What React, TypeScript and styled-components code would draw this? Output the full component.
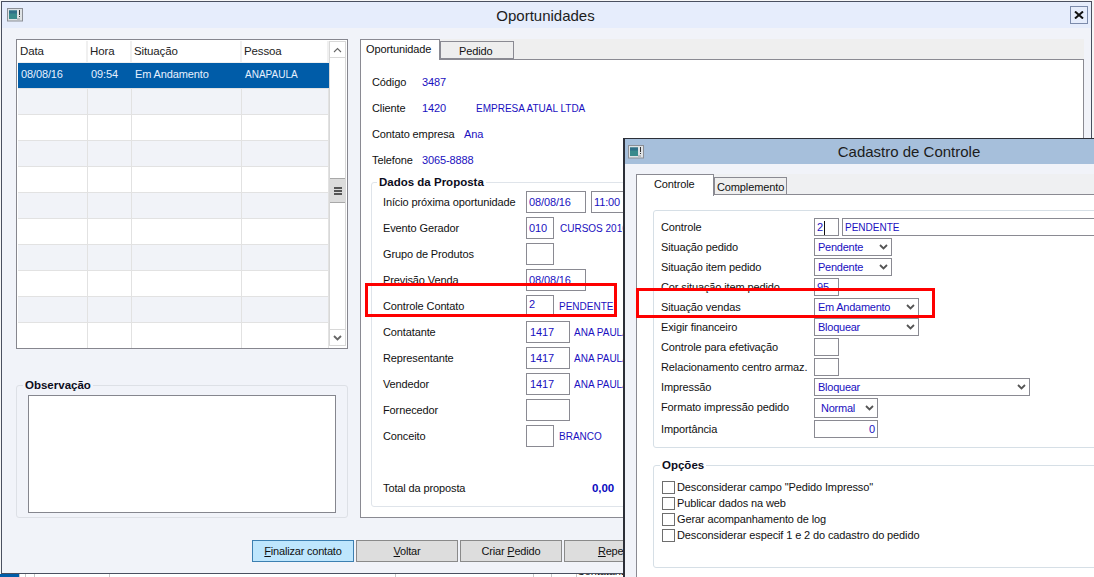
import React from "react";
import styled, { createGlobalStyle } from "styled-components";

const Global = createGlobalStyle`
  html, body { margin: 0; padding: 0; background: #fff; }
  * { box-sizing: border-box; }
  body { font-family: "Liberation Sans", Arial, sans-serif; font-size: 11px; letter-spacing: -0.12px; color: #111; }
`;

const Screen = styled.div`
  position: relative; width: 1094px; height: 577px; overflow: hidden; background: #f6f6f6;
`;
const Backdrop = styled.div`
  position: absolute; left: 0; top: 574px; width: 1094px; height: 3px;
  display: flex; background: #fff; overflow: hidden;
`;
const BackCell = styled.div<{ $w: number; $bg?: string }>`
  flex: none; width: ${p => p.$w}px; height: 3px; border-right: 1px solid #c8c8c8;
  background: ${p => p.$bg ?? "transparent"};
`;
const BackText = styled.div`
  flex: none; margin-top: -9px; font-size: 11px; line-height: 13px; color: #111;
`;
const Window = styled.div<{ $x: number; $y: number; $w: number; $h: number; $left: number; $bd: string }>`
  position: absolute; left: ${p => p.$x}px; top: ${p => p.$y}px;
  width: ${p => p.$w}px; height: ${p => p.$h}px;
  border: 1px solid ${p => p.$bd}; border-left-width: ${p => p.$left}px;
  display: flex; flex-direction: column; background: #f1f3f9;
`;
const TitleBar = styled.div<{ $h: number; $bg: string; $pad: number }>`
  flex: none; height: ${p => p.$h}px; background: ${p => p.$bg};
  display: grid; grid-template-columns: 1fr auto 1fr; align-items: center;
  padding: 0 3px 0 ${p => p.$pad}px;
`;
const Title = styled.div<{ $nudge?: number }>`
  font-size: 15px; color: #1c1c1c; letter-spacing: 0; padding-right: ${p => p.$nudge ?? 0}px;
`;
const CloseButton = styled.div`
  justify-self: end; width: 18px; height: 18px; margin-right: 0; border: 1px solid #7c8bab;
  display: flex; align-items: center; justify-content: center; background: #e6edfc;
`;
const MainBody = styled.div`
  flex: 1; padding: 11px 0 0 14px; display: flex; flex-direction: column;
`;
const Columns = styled.div`
  display: grid; grid-template-columns: 332px 724px; column-gap: 12px; height: 479px;
`;
const LeftColumn = styled.div`display: flex; flex-direction: column;`;
const ListBox = styled.div`
  height: 310px; border: 1px solid #86868e; padding: 1px 1px 2px 1px; background: #fff;
  display: grid; grid-template-columns: 311px 17px; overflow: hidden;
`;
const ListCols = "70px 44px 110px 87px";
const ListHead = styled.div`
  display: grid; grid-template-columns: ${ListCols}; height: 22px; background: #f0f0f0;
`;
const HeadCell = styled.div`
  background: #fff; margin-right: 2px; padding-left: 2px; line-height: 21px; height: 21px; font-size: 11.5px; color: #222;
`;
const ListRow = styled.div<{ $sel?: boolean; $alt?: boolean }>`
  display: grid; grid-template-columns: ${ListCols}; height: 26px;
  background: ${p => (p.$sel ? "#005ca8" : p.$alt ? "#f1f3f8" : "#fff")};
  border-bottom: 1px solid #e2e2e2;
  color: ${p => (p.$sel ? "#e6f0ff" : "inherit")};
`;
const ListCell = styled.div<{ $sel?: boolean; $caps?: boolean }>`
  border-right: 1px solid ${p => (p.$sel ? "transparent" : "#e2e2e2")};
  padding-left: 3px; line-height: ${p => (p.$caps ? 23 : 22)}px; font-size: ${p => (p.$caps ? 10 : 11)}px;
  letter-spacing: ${p => (p.$caps ? 0 : -0.12)}px;
`;
const ScrollBar = styled.div`
  display: flex; flex-direction: column; height: 305px; background: #fff;
  border-left: 1px solid #d8d8d8; border-right: 1px solid #d8d8d8;
`;
const ScrollBtn = styled.div`
  flex: none; height: 17px; display: flex; align-items: center; justify-content: center;
  border-top: 1px solid #d8d8d8; border-bottom: 1px solid #d8d8d8; background: #fff;
`;
const ScrollThumb = styled.div`
  flex: none; height: 25px; margin-top: 120px; background: #dcdcdc;
  border-top: 1px solid #a8a8a8; border-bottom: 1px solid #a8a8a8;
  display: flex; flex-direction: column; gap: 1px; align-items: center; justify-content: center;
`;
const ThumbLine = styled.div`width: 8px; height: 2px; background: #555;`;
const ScrollGap = styled.div`flex: 1;`;

const Group = styled.div<{ $h: number; $mt?: number; $mr?: number; $ml?: number; $pad: string; $c?: string }>`
  position: relative; flex: none; height: ${p => p.$h}px; margin-top: ${p => p.$mt ?? 0}px;
  margin-right: ${p => p.$mr ?? 0}px; margin-left: ${p => p.$ml ?? 0}px; padding: ${p => p.$pad};
  border: 1px solid ${p => p.$c ?? "#dde0e6"}; border-radius: 3px;
`;
const Legend = styled.div<{ $x: number; $bg: string }>`
  position: absolute; left: ${p => p.$x}px; top: -8px; padding: 0 2px; height: 14px; line-height: 14px;
  background: ${p => p.$bg}; font-weight: 700; font-size: 11.5px; color: #0c0c20; letter-spacing: 0;
`;
const TextArea = styled.div`
  width: 308px; height: 118px; background: #fff; border: 1px solid #85868e;
`;
const TabStrip = styled.div<{ $bg: string; $h: number }>`
  flex: none; display: flex; align-items: flex-start; height: ${p => p.$h}px; background: ${p => p.$bg};
`;
const Tab = styled.div<{ $active?: boolean; $w: number; $h: number; $mt: number; $pl: number }>`
  position: relative; z-index: 1; flex: none; width: ${p => p.$w}px; height: ${p => p.$h}px; margin-top: ${p => p.$mt}px;
  padding-left: ${p => p.$pl}px; font-size: 11px; line-height: ${p => (p.$active ? 19 : 18)}px;
  background: ${p => (p.$active ? "#fff" : "#eeeeee")};
  border: 1px solid #8a8a92; ${p => (p.$active ? "border-bottom: none;" : "")}
`;
const TabPanel = styled.div<{ $h?: number; $pad: string }>`
  flex: none; ${p => (p.$h ? `height: ${p.$h}px;` : "flex: 1;")} background: #fff;
  border: 1px solid #8a8a92; padding: ${p => p.$pad};
`;
const RightColumn = styled.div`display: flex; flex-direction: column;`;
const InfoRow = styled.div`height: 26px; display: flex; align-items: center;`;
const InfoLabel = styled.div<{ $w: number }>`flex: none; width: ${p => p.$w}px; color: #111;`;
const Value = styled.div<{ $w?: number; $caps?: boolean }>`
  flex: none; color: #1a10c0; white-space: nowrap; ${p => (p.$w ? `width: ${p.$w}px;` : "")}
  font-size: ${p => (p.$caps ? 10 : 11)}px; letter-spacing: ${p => (p.$caps ? 0 : -0.12)}px;
`;
const FormRow = styled.div`height: 26px; display: flex; align-items: flex-start;`;
const FormLabel = styled.div`flex: none; width: 143px; line-height: 22px; color: #111; font-size: 11px;`;
const Input = styled.div<{ $w: number; $h?: number; $ml?: number; $right?: boolean; $pl?: number; $caps?: boolean; $lift?: number }>`
  flex: none; width: ${p => p.$w}px; height: ${p => p.$h ?? 22}px; margin-left: ${p => p.$ml ?? 0}px;
  border: 1px solid #8a8a92; background: #fff; color: #1a10c0; white-space: nowrap; overflow: hidden;
  padding: 0 ${p => (p.$right ? 2 : 0)}px 0 ${p => p.$pl ?? 2}px;
  line-height: ${p => (p.$h ?? 22) - 2 - (p.$lift ?? 0) + (p.$caps ? 1 : 0)}px;
  font-size: ${p => (p.$caps ? 10 : 11)}px; letter-spacing: ${p => (p.$caps ? 0 : -0.12)}px;
  text-align: ${p => (p.$right ? "right" : "left")};
`;
const Caret = styled.span`
  display: inline-block; width: 1px; height: 14px; margin-left: 1px; background: #111; vertical-align: middle;
`;
const Linked = styled.div<{ $ml: number }>`
  flex: none; margin-left: ${p => p.$ml}px; line-height: 23px; color: #1a10c0; white-space: nowrap; font-size: 10px; letter-spacing: 0;
`;
const TotalRow = styled.div`
  margin-top: 26px; width: 231px; height: 22px; display: flex; align-items: center; justify-content: space-between;
`;
const TotalValue = styled.div`font-weight: 700; color: #0a0ac0; font-size: 11.5px;`;
const Footer = styled.div`
  margin-top: 22px; margin-left: 236px; display: flex; gap: 2px;
`;
const Button = styled.div<{ $focus?: boolean }>`
  flex: none; width: 102px; height: 22px; line-height: 20px; text-align: center; font-size: 11px;
  letter-spacing: -0.2px;
  color: #111; background: ${p => (p.$focus ? "#bee6fd" : "#dddddd")};
  border: 1px solid ${p => (p.$focus ? "#3c7fb1" : "#8a8a8a")};
`;
const ChildBody = styled.div`
  flex: 1; padding: 10px 0 0 11px; display: flex; flex-direction: column;
`;
const CtlRow = styled.div<{ $h?: number }>`
  height: ${p => p.$h ?? 20}px; display: flex; align-items: flex-start;
`;
const CtlLabel = styled.div`flex: none; width: 153px; line-height: 18px; color: #111; white-space: nowrap;`;
const SelectBox = styled.div<{ $w: number; $h?: number; $pl?: number }>`
  flex: none; width: ${p => p.$w}px; height: ${p => p.$h ?? 18}px; display: flex; align-items: center; justify-content: space-between;
  border: 1px solid #8a8a92; background: #fff; color: #1a10c0; padding: 0 3px 0 ${p => p.$pl ?? 3}px;
  letter-spacing: -0.25px;
`;
const CheckRow = styled.div`height: 16px; display: flex; align-items: center; gap: 2px;`;
const CheckBox = styled.div`flex: none; width: 13px; height: 13px; background: #fff; border: 1px solid #6e6e6e;`;
const CheckText = styled.div`color: #111; white-space: nowrap;`;
const RedBox = styled.div<{ $x: number; $y: number; $w: number; $h: number }>`
  position: absolute; left: ${p => p.$x}px; top: ${p => p.$y}px; width: ${p => p.$w}px; height: ${p => p.$h}px;
  border: 3px solid #fe0000; z-index: 5;
`;

const WinIcon = () => (
  <svg width="16" height="14" viewBox="0 0 16 14">
    <rect x="0.5" y="0.5" width="15" height="12.5" fill="#dfe3e6" stroke="#8b8f96" />
    <rect x="2" y="2.5" width="8" height="8.5" fill="#3a8a8c" />
    <rect x="2" y="2.5" width="8" height="3" fill="#2f6f88" />
    <rect x="12" y="2" width="1" height="5" fill="#333" />
    <rect x="12" y="8" width="1" height="1" fill="#333" />
    <rect x="10" y="10" width="3" height="2" fill="#b8bcc2" />
  </svg>
);
const CloseX = () => (
  <svg width="10" height="8" viewBox="0 0 10 8">
    <path d="M1 0.5 L9 7.5 M9 0.5 L1 7.5" stroke="#111" strokeWidth="2" fill="none" />
  </svg>
);
const ChevDown = ({ c = "#555" }: { c?: string }) => (
  <svg width="9" height="6" viewBox="0 0 9 6">
    <path d="M1 1 L4.5 4.5 L8 1" stroke={c} strokeWidth="1.8" fill="none" />
  </svg>
);
const ChevUp = () => (
  <svg width="9" height="6" viewBox="0 0 9 6">
    <path d="M1 5 L4.5 1.5 L8 5" stroke="#666" strokeWidth="1.1" fill="none" />
  </svg>
);

const emptyRows = Array.from({ length: 10 }, (_, i) => i);

export default function App() {
  return (
    <Screen>
      <Global />
      <Backdrop>
        <BackCell $w={20} $bg="#005ca8" />
        <BackCell $w={6} />
        <BackCell $w={9} />
        <BackCell $w={75} />
        <BackCell $w={286} />
        <BackCell $w={138} />
        <BackCell $w={18} />
        <BackCell $w={25} />
        <BackText>Contatante</BackText>
      </Backdrop>

      <Window $x={1} $y={1} $w={1091} $h={573} $left={1} $bd="#4a5060">
        <TitleBar $h={26} $bg="#e6edfc" $pad={5}>
          <WinIcon />
          <Title $nudge={4}>Oportunidades</Title>
          <CloseButton><CloseX /></CloseButton>
        </TitleBar>
        <MainBody>
          <Columns>
            <LeftColumn>
              <ListBox>
                <div>
                  <ListHead>
                    <HeadCell>Data</HeadCell>
                    <HeadCell>Hora</HeadCell>
                    <HeadCell>Situação</HeadCell>
                    <HeadCell>Pessoa</HeadCell>
                  </ListHead>
                  <ListRow $sel>
                    <ListCell $sel>08/08/16</ListCell>
                    <ListCell $sel>09:54</ListCell>
                    <ListCell $sel>Em Andamento</ListCell>
                    <ListCell $sel $caps>ANAPAULA</ListCell>
                  </ListRow>
                  {emptyRows.map(i => (
                    <ListRow key={i} $alt={i % 2 === 0}>
                      <ListCell /><ListCell /><ListCell /><ListCell />
                    </ListRow>
                  ))}
                </div>
                <ScrollBar>
                  <ScrollBtn><ChevUp /></ScrollBtn>
                  <ScrollThumb><ThumbLine /><ThumbLine /><ThumbLine /></ScrollThumb>
                  <ScrollGap />
                  <ScrollBtn><ChevDown c="#666" /></ScrollBtn>
                </ScrollBar>
              </ListBox>
              <Group $h={133} $mt={36} $pad="9px 0 0 11px">
                <Legend $x={6} $bg="#f1f3f9">Observação</Legend>
                <TextArea />
              </Group>
            </LeftColumn>

            <RightColumn>
              <TabStrip $bg="#efefef" $h={20}>
                <Tab $active $w={80} $h={21} $mt={0} $pl={5}>Oportunidade</Tab>
                <Tab $w={74} $h={18} $mt={2} $pl={18}>Pedido</Tab>
              </TabStrip>
              <TabPanel $h={459} $pad="9px 0 0 11px">
                <InfoRow><InfoLabel $w={50}>Código</InfoLabel><Value>3487</Value></InfoRow>
                <InfoRow><InfoLabel $w={50}>Cliente</InfoLabel><Value $w={54}>1420</Value><Value $caps>EMPRESA ATUAL LTDA</Value></InfoRow>
                <InfoRow><InfoLabel $w={92}>Contato empresa</InfoLabel><Value>Ana</Value></InfoRow>
                <InfoRow><InfoLabel $w={50}>Telefone</InfoLabel><Value>3065-8888</Value></InfoRow>
                <Group $h={325} $mt={9} $mr={9} $ml={-1} $pad="8px 0 0 11px" $c="#dfe4ea">
                  <Legend $x={5} $bg="#fff">Dados da Proposta</Legend>
                  <FormRow><FormLabel>Início próxima oportunidade</FormLabel><Input $w={60}>08/08/16</Input><Input $w={60} $ml={5}>11:00</Input></FormRow>
                  <FormRow><FormLabel>Evento Gerador</FormLabel><Input $w={28}>010</Input><Linked $ml={6}>CURSOS 2016</Linked></FormRow>
                  <FormRow><FormLabel>Grupo de Produtos</FormLabel><Input $w={28} /></FormRow>
                  <FormRow><FormLabel>Previsão Venda</FormLabel><Input $w={60}>08/08/16</Input></FormRow>
                  <FormRow><FormLabel>Controle Contato</FormLabel><Input $w={28} $lift={4}>2</Input><Linked $ml={5}>PENDENTE</Linked></FormRow>
                  <FormRow><FormLabel>Contatante</FormLabel><Input $w={44} $pl={3}>1417</Input><Linked $ml={4}>ANA PAULA</Linked></FormRow>
                  <FormRow><FormLabel>Representante</FormLabel><Input $w={44} $pl={3}>1417</Input><Linked $ml={4}>ANA PAULA</Linked></FormRow>
                  <FormRow><FormLabel>Vendedor</FormLabel><Input $w={44} $pl={3}>1417</Input><Linked $ml={4}>ANA PAULA</Linked></FormRow>
                  <FormRow><FormLabel>Fornecedor</FormLabel><Input $w={44} /></FormRow>
                  <FormRow><FormLabel>Conceito</FormLabel><Input $w={28} /><Linked $ml={5}>BRANCO</Linked></FormRow>
                  <TotalRow><span>Total da proposta</span><TotalValue>0,00</TotalValue></TotalRow>
                </Group>
              </TabPanel>
            </RightColumn>
          </Columns>
          <Footer>
            <Button $focus><u>F</u>inalizar contato</Button>
            <Button><u>V</u>oltar</Button>
            <Button>Criar <u>P</u>edido</Button>
            <Button><u>R</u>epetir</Button>
          </Footer>
        </MainBody>
      </Window>

      <Window $x={623} $y={138} $w={571} $h={450} $left={2} $bd="#2c2f38">
        <TitleBar $h={25} $bg="#a6bfdb" $pad={3}>
          <WinIcon />
          <Title>Cadastro de Controle</Title>
          <span />
        </TitleBar>
        <ChildBody>
          <TabStrip $bg="#eff0f2" $h={20}>
            <Tab $active $w={78} $h={22} $mt={0} $pl={17}>Controle</Tab>
            <Tab $w={73} $h={18} $mt={3} $pl={2}>Complemento</Tab>
          </TabStrip>
          <TabPanel $pad="15px 0 0 16px">
            <Group $h={238} $pad="7px 0 0 7px" $c="#d6dfe6">
              <CtlRow><CtlLabel>Controle</CtlLabel><Input $w={25} $h={18}>2<Caret /></Input><Input $w={280} $h={18} $ml={3} $caps>PENDENTE</Input></CtlRow>
              <CtlRow><CtlLabel>Situação pedido</CtlLabel><SelectBox $w={78}>Pendente<ChevDown /></SelectBox></CtlRow>
              <CtlRow><CtlLabel>Situação item pedido</CtlLabel><SelectBox $w={78}>Pendente<ChevDown /></SelectBox></CtlRow>
              <CtlRow><CtlLabel>Cor situação item pedido</CtlLabel><Input $w={25} $h={18}>95</Input></CtlRow>
              <CtlRow><CtlLabel>Situação vendas</CtlLabel><SelectBox $w={105}>Em Andamento<ChevDown /></SelectBox></CtlRow>
              <CtlRow><CtlLabel>Exigir financeiro</CtlLabel><SelectBox $w={105}>Bloquear<ChevDown /></SelectBox></CtlRow>
              <CtlRow><CtlLabel>Controle para efetivação</CtlLabel><Input $w={25} $h={18} /></CtlRow>
              <CtlRow><CtlLabel>Relacionamento centro armaz.</CtlLabel><Input $w={25} $h={18} /></CtlRow>
              <CtlRow><CtlLabel>Impressão</CtlLabel><SelectBox $w={216}>Bloquear<ChevDown /></SelectBox></CtlRow>
              <CtlRow $h={22}><CtlLabel>Formato impressão pedido</CtlLabel><SelectBox $w={64} $h={20} $pl={6}>Normal<ChevDown /></SelectBox></CtlRow>
              <CtlRow><CtlLabel>Importância</CtlLabel><Input $w={64} $h={18} $right>0</Input></CtlRow>
            </Group>
            <Group $h={103} $mt={17} $pad="13px 0 0 8px" $c="#d6dfe6">
              <Legend $x={6} $bg="#fff">Opções</Legend>
              <CheckRow><CheckBox /><CheckText>Desconsiderar campo "Pedido Impresso"</CheckText></CheckRow>
              <CheckRow><CheckBox /><CheckText>Publicar dados na web</CheckText></CheckRow>
              <CheckRow><CheckBox /><CheckText>Gerar acompanhamento de log</CheckText></CheckRow>
              <CheckRow><CheckBox /><CheckText>Desconsiderar especif 1 e 2 do cadastro do pedido</CheckText></CheckRow>
            </Group>
          </TabPanel>
        </ChildBody>
      </Window>

      <RedBox $x={365} $y={283} $w={252} $h={34} />
      <RedBox $x={636} $y={288} $w={299} $h={30} />
    </Screen>
  );
}
